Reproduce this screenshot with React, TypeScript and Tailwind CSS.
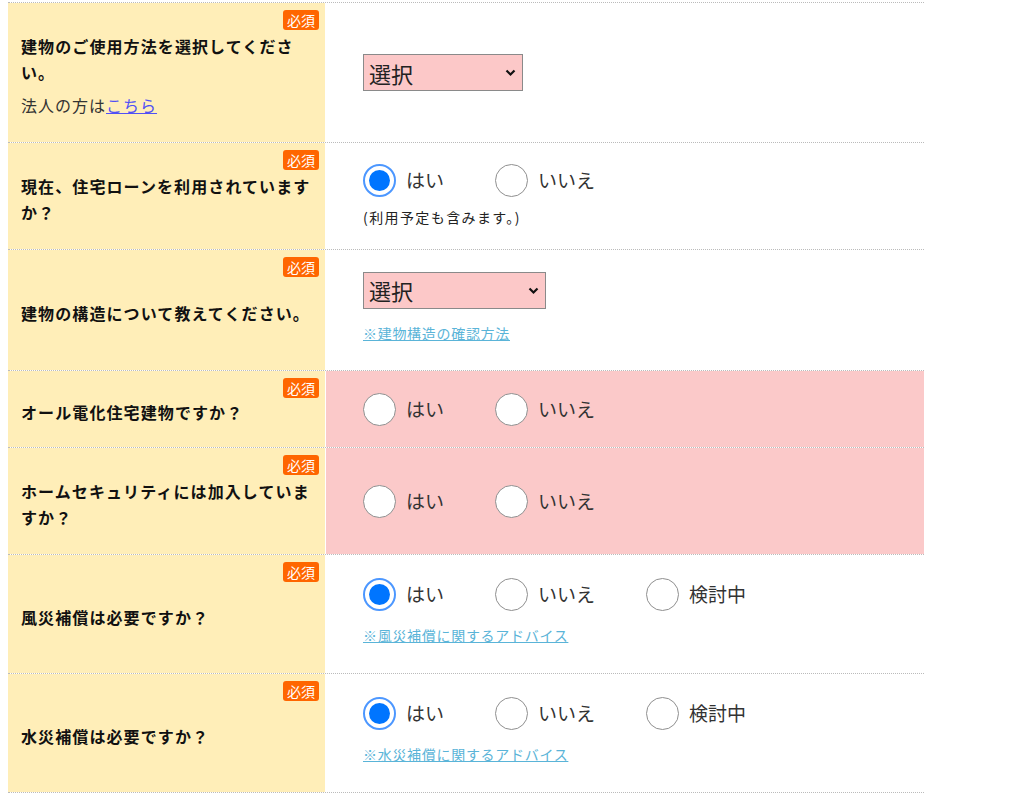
import type { ReactNode } from "react";

function Badge() {
  return (
    <span className="absolute right-[6px] top-[7px] rounded-[3px] bg-[#ff6600] px-[4px] text-[14px] leading-[20px] text-white">
      必須
    </span>
  );
}

function Row({ h, label, pink, children }: { h: string; label: ReactNode; pink?: boolean; children: ReactNode }) {
  return (
    <div className={`grid grid-cols-[317px_1fr] gap-x-px border-t border-dotted border-[#bbbbbb] ${h}`}>
      <div className="relative flex items-center bg-[#ffeeb8] pl-[13px] pr-[10px] pt-[6px]">
        <Badge />
        <div className="text-[16px] font-bold leading-[26px] tracking-[1.1px] text-[#111]">{label}</div>
      </div>
      <div className={`flex flex-col justify-center pl-[37px] ${pink ? "bg-[#fbc9c9]" : "bg-white"}`}>{children}</div>
    </div>
  );
}

function Radio({ label, checked }: { label: string; checked?: boolean }) {
  return (
    <label className="flex items-center gap-[10px]">
      {checked ? (
        <span className="flex h-[33px] w-[33px] items-center justify-center rounded-full border-2 border-[#4c97ff] bg-white">
          <span className="h-[21px] w-[21px] rounded-full bg-[#0075ff]" />
        </span>
      ) : (
        <span className="h-[33px] w-[33px] rounded-full border-[1.5px] border-[#8f8f8f] bg-white" />
      )}
      <span className="text-[19px] leading-[24px] text-[#333]">{label}</span>
    </label>
  );
}

function Radios({ yes, maybe }: { yes?: boolean; maybe?: boolean }) {
  return (
    <div className="flex items-center gap-[51px]">
      <Radio label="はい" checked={yes} />
      <Radio label="いいえ" />
      {maybe && <Radio label="検討中" />}
    </div>
  );
}

function Select({ w }: { w: string }) {
  return (
    <div className={`relative h-[37px] ${w}`}>
      <select className="h-full w-full appearance-none border border-[#8a8a8a] bg-[#fcc8c8] pl-[5px] text-[22px] leading-[28px] text-[#222] outline-none">
        <option>選択</option>
      </select>
      <svg className="pointer-events-none absolute right-[7px] top-[15px]" width="11" height="8" viewBox="0 0 11 8">
        <polyline points="1.5,1.5 5.5,5.5 9.5,1.5" fill="none" stroke="#111" strokeWidth="2.2" />
      </svg>
    </div>
  );
}

function Advice({ text }: { text: string }) {
  return (
    <a href="#" className="mb-[6px] mt-[14px] w-fit text-[14px] leading-[20px] tracking-[0.7px] text-[#5ab4d8] underline">
      {text}
    </a>
  );
}

export default function App() {
  return (
    <div className="min-h-screen bg-white pt-[2px] font-['Noto_Sans_CJK_JP',sans-serif]">
      <div className="ml-[8px] w-[916px] border-b border-dotted border-[#bbbbbb]">
        <Row
          h="h-[140px]"
          label={
            <>
              <p>建物のご使用方法を選択してください。</p>
              <p className="mt-[7px] font-normal tracking-[1px] text-[#333]">
                法人の方は<a href="#" className="text-[#5050f5] underline">こちら</a>
              </p>
            </>
          }
        >
          <Select w="w-[160px]" />
        </Row>

        <Row h="h-[107px]" label="現在、住宅ローンを利用されていますか？">
          <div className="-mt-[3px]">
            <Radios yes />
          </div>
          <p className="mt-[11px] text-[14px] leading-[18px] tracking-[1.4px] text-[#222]">(利用予定も含みます。)</p>
        </Row>

        <Row h="h-[121px]" label="建物の構造について教えてください。">
          <Select w="w-[183px]" />
          <Advice text="※建物構造の確認方法" />
        </Row>

        <Row h="h-[77px]" pink label="オール電化住宅建物ですか？">
          <Radios />
        </Row>

        <Row h="h-[107px]" pink label="ホームセキュリティには加入していますか？">
          <Radios />
        </Row>

        <Row h="h-[119px]" label="風災補償は必要ですか？">
          <Radios yes maybe />
          <Advice text="※風災補償に関するアドバイス" />
        </Row>

        <Row h="h-[119px]" label="水災補償は必要ですか？">
          <Radios yes maybe />
          <Advice text="※水災補償に関するアドバイス" />
        </Row>
      </div>
    </div>
  );
}
